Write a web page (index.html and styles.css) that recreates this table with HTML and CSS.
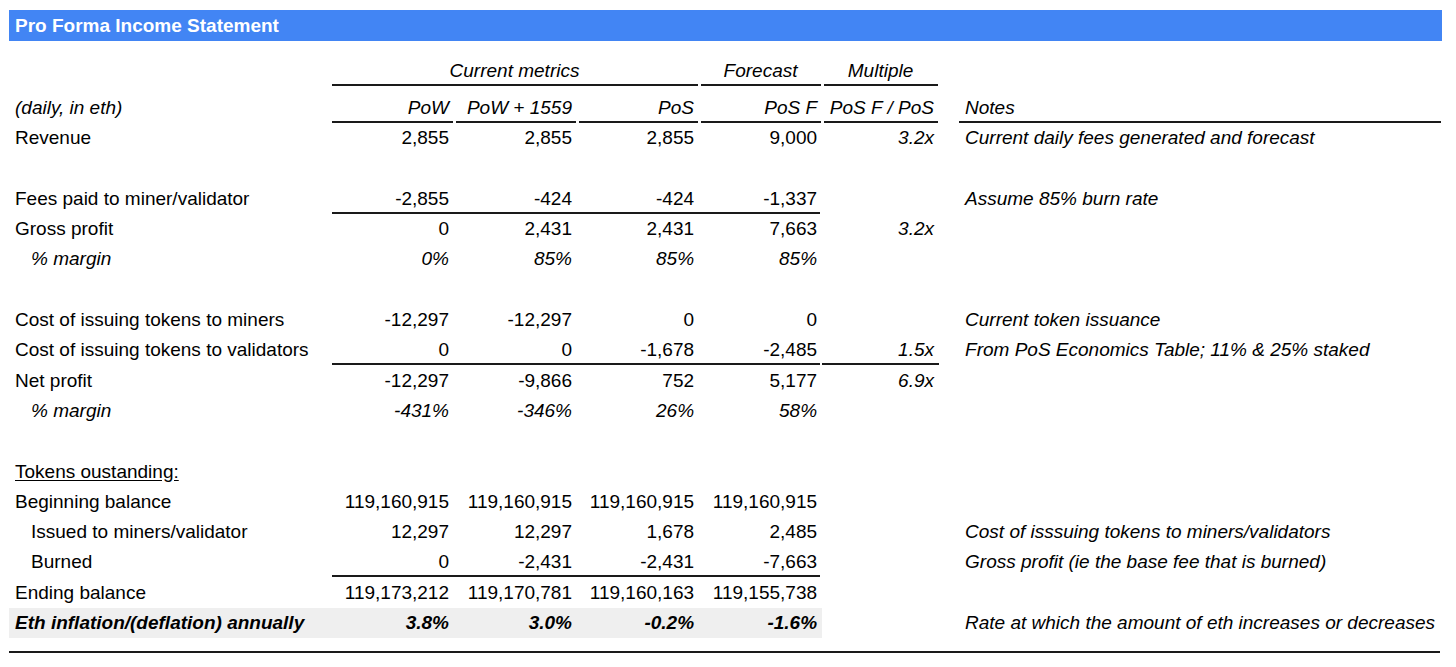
FILE: index.html
```html
<!DOCTYPE html>
<html lang="en">
<head>
<meta charset="utf-8">
<title>Pro Forma Income Statement</title>
<link rel="stylesheet" href="styles.css">
</head>
<body>
<div class="sheet">
  <div class="title-bar">Pro Forma Income Statement</div>
  <table class="grid">
    <colgroup>
      <col class="c-label"><col class="c-pow"><col class="c-1559"><col class="c-pos"><col class="c-posf"><col class="c-mult"><col class="c-gap"><col class="c-notes">
    </colgroup>
    <tbody>
      <tr class="r-head1">
        <td></td>
        <td colspan="3" class="ctr it ul">Current metrics</td>
        <td class="ctr it ul">Forecast</td>
        <td class="ctr it ul">Multiple</td>
        <td></td><td></td>
      </tr>
      <tr class="r-head2">
        <td class="lbl it">(daily, in eth)</td>
        <td class="num it ul">PoW</td>
        <td class="num it ul">PoW + 1559</td>
        <td class="num it ul">PoS</td>
        <td class="num it ul">PoS F</td>
        <td class="num it ul">PoS F / PoS</td>
        <td></td>
        <td class="note ul">Notes</td>
      </tr>
      <tr>
        <td class="lbl">Revenue</td>
        <td class="num">2,855</td><td class="num">2,855</td><td class="num">2,855</td><td class="num">9,000</td>
        <td class="num it">3.2x</td><td></td>
        <td class="note">Current daily fees generated and forecast</td>
      </tr>
      <tr><td></td><td></td><td></td><td></td><td></td><td></td><td></td><td></td></tr>
      <tr class="rule">
        <td class="lbl">Fees paid to miner/validator</td>
        <td class="num first">-2,855</td><td class="num">-424</td><td class="num">-424</td><td class="num last">-1,337</td>
        <td></td><td></td>
        <td class="note">Assume 85% burn rate</td>
      </tr>
      <tr>
        <td class="lbl">Gross profit</td>
        <td class="num">0</td><td class="num">2,431</td><td class="num">2,431</td><td class="num">7,663</td>
        <td class="num it">3.2x</td><td></td><td></td>
      </tr>
      <tr class="it">
        <td class="lbl ind">% margin</td>
        <td class="num">0%</td><td class="num">85%</td><td class="num">85%</td><td class="num">85%</td>
        <td></td><td></td><td></td>
      </tr>
      <tr><td></td><td></td><td></td><td></td><td></td><td></td><td></td><td></td></tr>
      <tr>
        <td class="lbl">Cost of issuing tokens to miners</td>
        <td class="num">-12,297</td><td class="num">-12,297</td><td class="num">0</td><td class="num">0</td>
        <td></td><td></td>
        <td class="note">Current token issuance</td>
      </tr>
      <tr class="rule">
        <td class="lbl">Cost of issuing tokens to validators</td>
        <td class="num first">0</td><td class="num">0</td><td class="num">-1,678</td><td class="num last">-2,485</td>
        <td class="num it">1.5x</td><td></td>
        <td class="note">From PoS Economics Table; 11% &amp; 25% staked</td>
      </tr>
      <tr>
        <td class="lbl">Net profit</td>
        <td class="num">-12,297</td><td class="num">-9,866</td><td class="num">752</td><td class="num">5,177</td>
        <td class="num it">6.9x</td><td></td><td></td>
      </tr>
      <tr class="it">
        <td class="lbl ind">% margin</td>
        <td class="num">-431%</td><td class="num">-346%</td><td class="num">26%</td><td class="num">58%</td>
        <td></td><td></td><td></td>
      </tr>
      <tr><td></td><td></td><td></td><td></td><td></td><td></td><td></td><td></td></tr>
      <tr>
        <td class="lbl"><span class="u">Tokens oustanding:</span></td>
        <td></td><td></td><td></td><td></td><td></td><td></td><td></td>
      </tr>
      <tr>
        <td class="lbl">Beginning balance</td>
        <td class="num">119,160,915</td><td class="num">119,160,915</td><td class="num">119,160,915</td><td class="num">119,160,915</td>
        <td></td><td></td><td></td>
      </tr>
      <tr>
        <td class="lbl ind">Issued to miners/validator</td>
        <td class="num">12,297</td><td class="num">12,297</td><td class="num">1,678</td><td class="num">2,485</td>
        <td></td><td></td>
        <td class="note">Cost of isssuing tokens to miners/validators</td>
      </tr>
      <tr class="rule">
        <td class="lbl ind">Burned</td>
        <td class="num first">0</td><td class="num">-2,431</td><td class="num">-2,431</td><td class="num last">-7,663</td>
        <td></td><td></td>
        <td class="note">Gross profit (ie the base fee that is burned)</td>
      </tr>
      <tr>
        <td class="lbl">Ending balance</td>
        <td class="num">119,173,212</td><td class="num">119,170,781</td><td class="num">119,160,163</td><td class="num">119,155,738</td>
        <td></td><td></td><td></td>
      </tr>
      <tr class="r-key">
        <td class="lbl shade">Eth inflation/(deflation) annually</td>
        <td class="num shade">3.8%</td><td class="num shade">3.0%</td><td class="num shade">-0.2%</td><td class="num shade">-1.6%</td>
        <td></td><td></td>
        <td class="note plain">Rate at which the amount of eth increases or decreases</td>
      </tr>
      <tr class="r-end">
        <td colspan="8" class="endline"></td>
      </tr>
    </tbody>
  </table>
</div>
</body>
</html>
```

FILE: styles.css
```css
html, body {
  margin: 0;
  padding: 0;
  background: #ffffff;
}

body {
  font-family: "Liberation Sans", Arial, sans-serif;
  font-size: 19px;
  color: #000000;
}

.sheet {
  padding: 10px 0 0 9px;
  width: 1433px;
}

.title-bar {
  height: 31px;
  line-height: 31px;
  background: #4285f4;
  color: #ffffff;
  font-weight: bold;
  padding-left: 6px;
  white-space: nowrap;
}

.grid {
  border-collapse: collapse;
  border-spacing: 0;
  table-layout: fixed;
  width: 1433px;
}

.c-label { width: 321px; }
.c-pow { width: 124px; }
.c-1559 { width: 123px; }
.c-pos { width: 122px; }
.c-posf { width: 123px; }
.c-mult { width: 117px; }
.c-gap { width: 18px; }
.c-notes { width: 485px; }

.grid tr {
  height: 30.3px;
}

.grid td {
  padding: 0 5px 4px 5px;
  line-height: 22px;
  vertical-align: bottom;
  white-space: nowrap;
  overflow: visible;
}

.grid tr.r-head1 { height: 45px; }
.grid tr.r-head2 { height: 37px; }
.grid tr.r-end { height: 15px; }

.lbl { padding-left: 6px !important; text-align: left; }
.lbl.ind { padding-left: 22px !important; }
.num { text-align: right; }
.ctr { text-align: center; }
.note { text-align: left; font-style: italic; padding-left: 8px !important; }
.it { font-style: italic; }
.u { text-decoration: underline; text-underline-offset: 2px; }

/* separated underline segments, as in a spreadsheet */
.ul {
  background-image: linear-gradient(#1a1a1a, #1a1a1a);
  background-repeat: no-repeat;
  background-size: calc(100% - 3px) 2px;
  background-position: center bottom;
}

/* continuous rule beneath a number block */
.rule .num {
  background-image: linear-gradient(#1a1a1a, #1a1a1a);
  background-repeat: no-repeat;
  background-size: 100% 2px;
  background-position: left bottom;
}
.rule .num.first {
  background-size: calc(100% - 2px) 2px;
  background-position: right bottom;
}
.rule .num.last {
  background-size: calc(100% - 2px) 2px;
  background-position: left bottom;
}

.r-key td { font-weight: bold; font-style: italic; }
.r-key td.plain { font-weight: normal; }
.shade { background: #efefef; }

.endline {
  padding: 0 !important;
  background-image: linear-gradient(#1a1a1a, #1a1a1a);
  background-repeat: no-repeat;
  background-size: calc(100% - 2px) 2px;
  background-position: left bottom;
}
```
